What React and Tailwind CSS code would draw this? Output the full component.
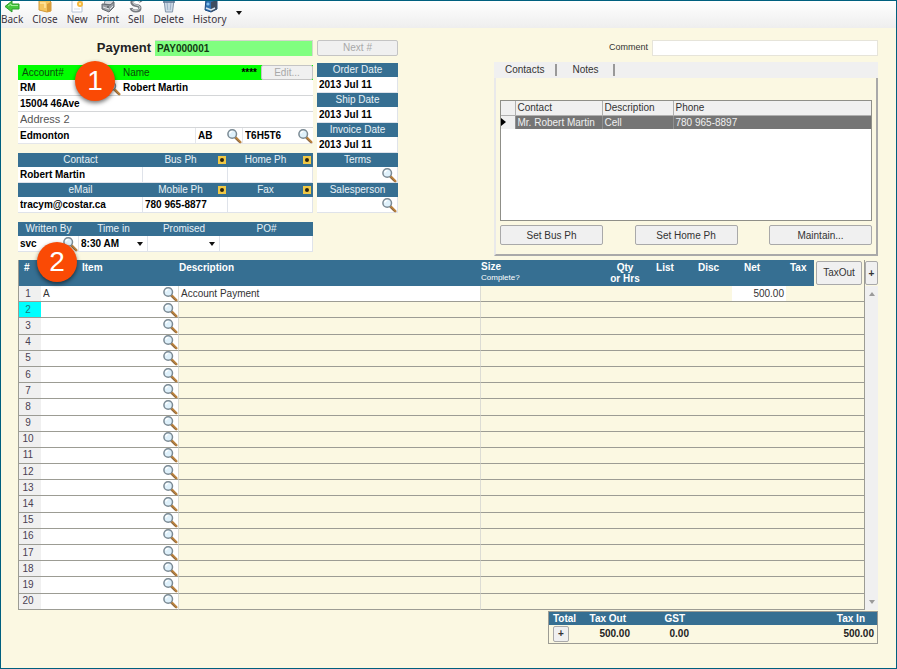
import React, { useState } from "react"

const Magnifier = () => (
  <svg viewBox="0 0 16 16" className="w-4 h-4 block">
    <path d="M9.5 9.5 L14.2 14.2" stroke="#b9813c" strokeWidth="2.6" strokeLinecap="round" />
    <path d="M9.2 10.4 L13.4 14.6" stroke="#6f5a48" strokeWidth="0.8" />
    <circle cx="6.2" cy="6" r="4.3" fill="#dff1fb" stroke="#7b8a94" strokeWidth="1.5" />
    <path d="M3.8 5.6 A2.6 2.6 0 0 1 6.4 3.4" stroke="#ffffff" strokeWidth="1.2" fill="none" />
  </svg>
)

const Caret = () => (
  <svg viewBox="0 0 6 4" className="w-[6px] h-1 block">
    <path d="M0 0 H6 L3 4 Z" fill="#111111" />
  </svg>
)

const BackIcon = () => (
  <svg viewBox="0 0 16 16" className="w-4 h-4">
    <path d="M1 9.5 L8 4 V7 H15 V12 H8 V15 Z" fill="#46c93c" stroke="#2b9a2a" />
    <path d="M4 9 L7 7 V8.5 H14" stroke="#a5ef9a" fill="none" />
  </svg>
)

const CloseIcon = () => (
  <svg viewBox="0 0 16 16" className="w-4 h-4">
    <path d="M2 3 H12 L14 5 V14 L10 15 L2 13 Z" fill="#f4c55f" stroke="#d39a3a" />
    <path d="M10 7 L14 5 V14 L10 15 Z" fill="#d89c38" />
    <path d="M3 6 H8 V11" stroke="#ffe6a3" strokeWidth="1.5" fill="none" />
  </svg>
)

const NewIcon = () => (
  <svg viewBox="0 0 16 16" className="w-4 h-4">
    <path d="M3 1 H13 V15 H3 Z" fill="#ffffff" stroke="#b5c3d6" />
    <path d="M5 12 H11" stroke="#d5dfeb" />
    <circle cx="11" cy="7" r="3" fill="#f6b73c" />
    <circle cx="11" cy="7" r="1.2" fill="#ffe9a0" />
  </svg>
)

const PrintIcon = () => (
  <svg viewBox="0 0 16 16" className="w-4 h-4">
    <path d="M6 1 L14 3 L12 8 L4 7 Z" fill="#d4d6da" stroke="#7f858c" />
    <path d="M2 7 L10 8 L14 5 V10 L9 15 L2 12 Z" fill="#989da3" stroke="#63686e" />
    <path d="M3 10 L9 12 M10 12 L13 9" stroke="#e0e2e5" />
    <circle cx="8" cy="10" r="0.8" fill="#35393e" />
  </svg>
)

const SellIcon = () => (
  <svg viewBox="0 0 16 16" className="w-4 h-4">
    <path
      d="M13 5 C11 1 3 2 4 6 C5 10 12 7 12 11 C12 15 4 15 3 11"
      fill="none"
      stroke="#777b80"
      strokeWidth="3"
    />
    <path
      d="M12 5 C10 2 4 3 5 6 C6 9 12 7 12 11 C11 14 5 14 4 12"
      fill="none"
      stroke="#d6d8da"
      strokeWidth="1"
    />
  </svg>
)

const DeleteIcon = () => (
  <svg viewBox="0 0 16 16" className="w-4 h-4">
    <path d="M3 3 H13 L11.5 15 H4.5 Z" fill="#cdd9e6" stroke="#8496aa" />
    <path d="M6 5 L6.8 13 M10 5 L9.2 13" stroke="#9eb2c8" />
    <path d="M2 5 H14" stroke="#5f7896" strokeWidth="1.5" />
  </svg>
)

const HistoryIcon = () => (
  <svg viewBox="0 0 16 16" className="w-4 h-4">
    <path d="M4 2 L10 1 L15 3 V12 L9 15 L3 13 Z" fill="#2f6fb0" stroke="#1d4b80" />
    <path d="M9 5 L15 3 V12 L9 15 Z" fill="#3e4d60" />
    <path d="M4 11 L9 13 L13 11" stroke="#d8e3ef" strokeWidth="1.5" fill="none" />
    <circle cx="6" cy="7" r="1.6" fill="#7fc0ee" />
  </svg>
)

const tools = [
  { name: "Back", icon: <BackIcon /> },
  { name: "Close", icon: <CloseIcon /> },
  { name: "New", icon: <NewIcon /> },
  { name: "Print", icon: <PrintIcon /> },
  { name: "Sell", icon: <SellIcon /> },
  { name: "Delete", icon: <DeleteIcon /> },
  { name: "History", icon: <HistoryIcon /> },
]

const Toolbar = () => (
  <nav className="h-[27px] overflow-hidden flex items-end gap-[9px] pb-[3px] bg-gradient-to-b from-white to-[#eeeeee] font-['Noto_Sans'] text-[10px] leading-3 text-[#3c3440]">
    {tools.map(({ name, icon }) => (
      <button key={name} className="flex flex-col items-center">
        {icon}
        {name}
      </button>
    ))}
    <button aria-label="More" className="self-center">
      <Caret />
    </button>
  </nav>
)

const Badge = ({ children, className }) => (
  <span
    className={`absolute z-10 w-10 h-10 rounded-full bg-[#fa4a05] text-white text-[28px] leading-10 text-center shadow-[0_2px_4px_rgba(0,0,0,0.55)] ${className}`}
  >
    {children}
  </span>
)

const inputClass =
  "min-w-0 flex-1 h-full px-[2px] bg-transparent font-bold text-[10px] text-black outline-none"

// white row under a blue label bar, with an optional lookup button
const Field = ({ id, label, value = "", lookup, plus, options }) => (
  <div className="min-w-0">
    <div className="h-[14px] flex items-center bg-[#366f92] text-[#e8f1f6] text-[10px] leading-[14px]">
      <label htmlFor={id} className="flex-1 text-center">
        {label}
      </label>
      {plus && (
        <button
          aria-label={`Add ${label}`}
          className="w-2 h-2 mr-[2px] flex items-center justify-center bg-[#f0c845]"
        >
          <span className="w-1 h-1 rounded-full bg-[#2b2410]" />
        </button>
      )}
    </div>
    <div className="relative h-4 flex items-center bg-white border-r border-b border-[#dfe3ea]">
      {options ? (
        <>
          <select id={id} defaultValue={value} className={`${inputClass} appearance-none`}>
            {options.map((o) => (
              <option key={o}>{o}</option>
            ))}
          </select>
          <span className="absolute right-1 pointer-events-none">
            <Caret />
          </span>
        </>
      ) : (
        <input id={id} defaultValue={value} className={inputClass} />
      )}
      {lookup && (
        <button aria-label={`Find ${label}`}>
          <Magnifier />
        </button>
      )}
    </div>
  </div>
)

const AddressBlock = () => (
  <div className="relative">
    <Badge className="left-[57px] -top-[4px]">1</Badge>
    <div className="h-[15px] flex bg-[#00ff00] text-[10px] leading-[15px] text-[#0b4a0b]">
      <label htmlFor="account" className="w-[105px] pl-1">
        Account#
      </label>
      <label htmlFor="name" className="flex-1">
        Name
      </label>
      <span className="font-bold text-black pr-1">****</span>
      <button className="w-[52px] bg-[#f0f0f0] border border-[#c4c4c4] rounded-[2px] leading-3 text-[#a8a8a8]">
        Edit...
      </button>
    </div>
    <div className="bg-white">
      <div className="h-4 flex items-center border-b border-[#d4d6d8]">
        <div className="w-[103px] h-full flex items-center">
          <input id="account" defaultValue="RM" className={inputClass} />
          <button aria-label="Find account">
            <Magnifier />
          </button>
        </div>
        <input id="name" defaultValue="Robert Martin" className={inputClass} />
      </div>
      <div className="h-4 flex border-b border-[#d4d6d8]">
        <input aria-label="Address 1" defaultValue="15004 46Ave" className={inputClass} />
      </div>
      <div className="h-4 flex border-b border-[#d4d6d8]">
        <input
          aria-label="Address 2"
          placeholder="Address 2"
          className="min-w-0 flex-1 px-[2px] text-[11px] outline-none placeholder:text-[#555555]"
        />
      </div>
      <div className="h-4 flex items-center border-b border-[#e4e6ea]">
        <input aria-label="City" defaultValue="Edmonton" className={inputClass} />
        <div className="w-[47px] h-full flex items-center border-l border-[#e4e6ea]">
          <input aria-label="Province" defaultValue="AB" className={inputClass} />
          <button aria-label="Find province">
            <Magnifier />
          </button>
        </div>
        <div className="w-[71px] h-full flex items-center border-l border-[#e4e6ea]">
          <input aria-label="Postal code" defaultValue="T6H5T6" className={inputClass} />
          <button aria-label="Find postal code">
            <Magnifier />
          </button>
        </div>
      </div>
    </div>
  </div>
)

const CustomerForm = () => (
  <div className="w-[295px] pt-[3px] flex flex-col gap-[9px]">
    <AddressBlock />
    <div className="grid grid-cols-[125px_85px_85px]">
      <Field id="contact" label="Contact" value="Robert Martin" />
      <Field id="bus" label="Bus Ph" plus />
      <Field id="home" label="Home Ph" plus />
      <Field id="email" label="eMail" value="tracym@costar.ca" />
      <Field id="mobile" label="Mobile Ph" value="780 965-8877" plus />
      <Field id="fax" label="Fax" plus />
    </div>
    <div className="grid grid-cols-[61px_69px_72px_93px]">
      <Field id="written" label="Written By" value="svc" lookup />
      <Field id="time" label="Time in" value="8:30 AM" options={["8:30 AM"]} />
      <Field id="promised" label="Promised" options={[""]} />
      <Field id="po" label="PO#" />
    </div>
  </div>
)

const grayButton =
  "bg-[#f0f0f0] border border-[#a9a9a9] rounded-[2px] text-[10px] text-[#333333]"

const ContactsPanel = () => {
  const [tab, setTab] = useState("Contacts")

  return (
    <section className="flex-1 ml-[92px] flex flex-col">
      <div className="h-4 flex items-center bg-[#f0f0f0] text-[10px] text-[#333333]">
        {["Contacts", "Notes"].map((t) => (
          <button
            key={t}
            onClick={() => setTab(t)}
            aria-pressed={tab === t}
            className="h-3 min-w-[58px] px-[11px] leading-3 border-r-2 border-[#999999]"
          >
            {t}
          </button>
        ))}
      </div>
      <div className="flex-1 flex flex-col px-1 pt-[22px] pb-2 border-l-2 border-l-[#e9e9ea] border-r-2 border-r-[#a9a9a9] border-b-2 border-b-[#a9a9a9]">
        <div className="h-[121px] bg-white border border-[#8f8f88]">
          <table className="w-full table-fixed border-collapse text-[10px] leading-[13px]">
            <colgroup>
              <col className="w-[14px]" />
              <col className="w-[87px]" />
              <col className="w-[71px]" />
              <col />
            </colgroup>
            <thead>
              <tr className="h-[14px] bg-[#f0f0f0] text-left text-[#333333]">
                <th className="border-b border-[#b0b0b0]" />
                <th className="font-normal p-0 pl-[2px] border-l border-b border-[#b0b0b0]">Contact</th>
                <th className="font-normal p-0 pl-[2px] border-l border-b border-[#b0b0b0]">Description</th>
                <th className="font-normal p-0 pl-[2px] border-l border-b border-[#b0b0b0]">Phone</th>
              </tr>
            </thead>
            <tbody>
              <tr className="h-[14px] bg-[#757575] text-[#f0f0f0]">
                <td className="p-0 bg-[#f0f0f0]">
                  <svg viewBox="0 0 5 8" className="w-[5px] h-2 block">
                    <path d="M0 0 L5 4 L0 8 Z" fill="#000000" />
                  </svg>
                </td>
                <td className="p-0 pl-[2px] border-l border-[#909090]">Mr. Robert Martin</td>
                <td className="p-0 pl-[2px] border-l border-[#909090]">Cell</td>
                <td className="p-0 pl-[2px] border-l border-[#909090]">780 965-8897</td>
              </tr>
            </tbody>
          </table>
        </div>
        <div className="mt-1 flex justify-between">
          <button className={`${grayButton} w-[103px] h-5`}>Set Bus Ph</button>
          <button className={`${grayButton} w-[103px] h-5`}>Set Home Ph</button>
          <button className={`${grayButton} w-[103px] h-5`}>Maintain...</button>
        </div>
      </div>
    </section>
  )
}

const lines = Array.from({ length: 20 }, (_, i) => ({
  no: i + 1,
  item: i === 0 ? "A" : "",
  description: i === 0 ? "Account Payment" : "",
  net: i === 0 ? "500.00" : "",
}))

const LineItems = () => {
  const line = "p-0 border-b border-[#9c9c94]"

  return (
    <section className="relative flex">
      <Badge className="left-[19px] -top-[18px]">2</Badge>
      <div className="flex-1">
        <table className="w-full h-[350px] table-fixed border-separate border-spacing-0 border-l border-r border-[#9c9c94] text-[10px] leading-3 text-[#333333]">
          <colgroup>
            <col className="w-[22px]" />
            <col className="w-[138px]" />
            <col />
            <col className="w-[124px]" />
            <col className="w-[40px]" />
            <col className="w-[40px]" />
            <col className="w-[47px]" />
            <col className="w-[54px]" />
            <col className="w-[28px]" />
            <col className="w-[50px]" />
          </colgroup>
          <thead>
            <tr className="h-[26px] bg-[#366f92] text-white text-left align-top">
              <th className="p-0 pt-[2px] pl-[5px]">#</th>
              <th className="p-0 pt-[2px] pl-[41px]">Item</th>
              <th className="p-0 pt-[2px]">Description</th>
              <th className="p-0 pt-[2px] leading-[10px]">
                Size
                <br />
                <span className="text-[8px] font-normal">Complete?</span>
              </th>
              <th className="p-0 pt-[2px] text-center leading-[11px] whitespace-nowrap">
                Qty
                <br />
                or Hrs
              </th>
              <th className="p-0 pt-[2px] text-center">List</th>
              <th className="p-0 pt-[2px] text-center">Disc</th>
              <th className="p-0 pt-[2px] pl-3">Net</th>
              <th className="p-0 pt-[2px] pl-1">Tax</th>
              <th className="p-0 bg-[#fbf8e2]">
                <button className={`${grayButton} w-[46px] h-6 ml-[2px] mt-[1px] block font-normal`}>
                  TaxOut
                </button>
              </th>
            </tr>
          </thead>
          <tbody>
            {lines.map(({ no, item, description, net }) => (
              <tr key={no}>
                <td
                  className={`${line} text-center pr-1 ${no === 2 ? "bg-[#00ffff] text-[#1c7a80]" : "bg-[#f0f0f0] text-[#4a4052]"}`}
                >
                  {no}
                </td>
                <td className={`${line} bg-white border-r border-r-[#dcdcd4]`}>
                  <div className="flex items-center h-[15px]">
                    <input
                      aria-label={`Item ${no}`}
                      defaultValue={item}
                      className="min-w-0 flex-1 px-[2px] text-[10px] outline-none"
                    />
                    <button aria-label={`Find item ${no}`}>
                      <Magnifier />
                    </button>
                  </div>
                </td>
                <td
                  className={`${line} pl-[2px] border-r border-r-[#dcdcd4] ${no === 1 ? "bg-white" : ""}`}
                >
                  {description}
                </td>
                <td className={line} />
                <td className={line} />
                <td className={line} />
                <td className={line} />
                <td className={`${line} text-right pr-[2px] ${net ? "bg-white" : ""}`}>{net}</td>
                <td className={line} />
                <td className={line} />
              </tr>
            ))}
          </tbody>
        </table>
      </div>
      <div className="w-[13px] flex flex-col">
        <button aria-label="Add column" className={`${grayButton} h-6 mt-[1px] mb-[1px] font-bold`}>
          +
        </button>
        <div className="flex-1 flex flex-col justify-between items-center py-[6px] bg-[#f0f0f0]">
          <svg viewBox="0 0 6 4" className="w-[6px] h-1">
            <path d="M0 4 H6 L3 0 Z" fill="#9a9a9a" />
          </svg>
          <svg viewBox="0 0 6 4" className="w-[6px] h-1">
            <path d="M0 0 H6 L3 4 Z" fill="#9a9a9a" />
          </svg>
        </div>
      </div>
    </section>
  )
}

const Totals = () => (
  <table className="self-end w-[330px] mt-[1px] table-fixed border-separate border-spacing-0 border border-[#9c9c94] text-[10px] leading-3 font-bold text-[#222222]">
    <thead>
      <tr className="h-[13px] bg-[#366f92] text-white">
        <th className="w-[36px] p-0 pl-1 text-left">Total</th>
        <th className="w-[45px] p-0 pr-1 text-right whitespace-nowrap">Tax Out</th>
        <th className="w-[59px] p-0 pr-1 text-right">GST</th>
        <th className="p-0 pr-3 text-right">Tax In</th>
      </tr>
    </thead>
    <tbody>
      <tr className="h-[18px]">
        <td className="p-0 pl-1">
          <button aria-label="Show totals" className={`${grayButton} w-4 h-4 leading-3 block font-bold`}>
            +
          </button>
        </td>
        <td className="p-0 text-right">500.00</td>
        <td className="p-0 text-right">0.00</td>
        <td className="p-0 pr-[3px] text-right">500.00</td>
      </tr>
    </tbody>
  </table>
)

const App = () => {
  return (
    <div className="min-h-screen flex flex-col bg-[#fbf8e2] border border-[#00607f] font-['Liberation_Sans',Arial,sans-serif]">
      <Toolbar />
      <main className="flex-1 flex flex-col pl-[17px] pr-[18px] pt-3">
        <div className="h-4 flex items-center gap-1">
          <div className="w-[295px] h-full flex items-center justify-end gap-1">
            <label htmlFor="payment" className="text-[13px] leading-4 font-bold text-[#222222]">
              Payment
            </label>
            <input
              id="payment"
              defaultValue="PAY000001"
              className="w-[158px] h-4 px-[2px] bg-[#80ff80] border-t border-r border-[#d4d8cc] text-[10px] font-bold text-[#123a12] outline-none"
            />
          </div>
          <button className="w-[81px] h-4 bg-[#f0f0f0] border border-[#c4c4c4] rounded-[2px] text-[10px] leading-3 text-[#a8a8a8]">
            Next #
          </button>
          <label htmlFor="comment" className="flex-1 text-right text-[9px] text-[#333333]">
            Comment
          </label>
          <input
            id="comment"
            className="w-[226px] h-4 px-1 bg-white border border-[#e6e4da] text-[10px] outline-none"
          />
        </div>

        <div className="mt-[6px] h-[194px] flex gap-1">
          <CustomerForm />
          <div className="w-[81px] pt-[1px]">
            <Field id="order" label="Order Date" value="2013 Jul 11" />
            <Field id="ship" label="Ship Date" value="2013 Jul 11" />
            <Field id="invoice" label="Invoice Date" value="2013 Jul 11" />
            <Field id="terms" label="Terms" lookup />
            <Field id="sales" label="Salesperson" lookup />
          </div>
          <ContactsPanel />
        </div>

        <div className="mt-1 flex flex-col">
          <LineItems />
          <Totals />
        </div>
      </main>
    </div>
  )
}

export default App
